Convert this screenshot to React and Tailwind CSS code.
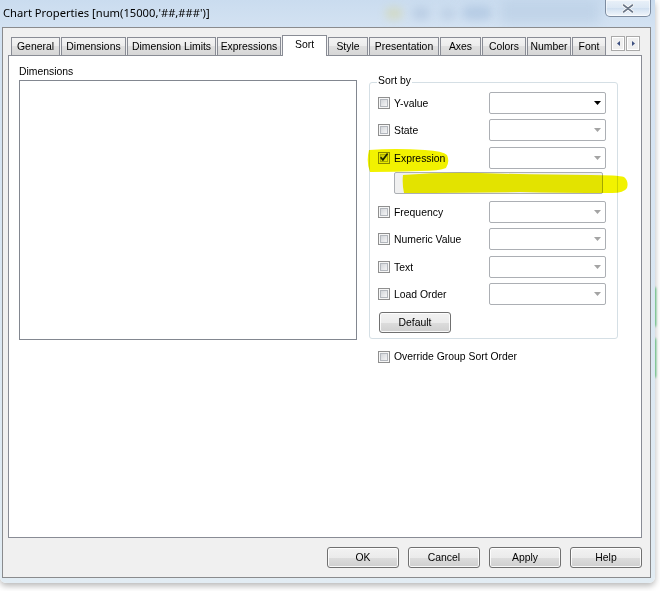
import React from "react";

function Checkbox({ checked }) {
  return (
    <div className="w-[12px] h-[12px] shrink-0 border border-[#8f8f8f] bg-[#f6f6f6] p-[1px]">
      <div className="relative w-full h-full border border-[#b3b7bd] bg-[linear-gradient(135deg,#d3d6da,#f5f5f6)]">
        {checked && (
          <svg className="absolute left-[-2px] top-[-3px]" width="10" height="10" viewBox="0 0 10 10">
            <path d="M1.6 5.2 L3.9 7.8 L8.6 1.6" fill="none" stroke="#1c2636" strokeWidth="1.7" />
          </svg>
        )}
      </div>
    </div>
  );
}

function Combo({ enabled }) {
  return (
    <div className="w-[117px] h-[22px] rounded-[2px] border border-[#acafb4] bg-white flex items-center justify-end pr-[4px]">
      <svg width="7" height="4" viewBox="0 0 7 4">
        <path d="M0 0H7L3.5 4Z" fill={enabled ? "#000000" : "#a4a4a4"} />
      </svg>
    </div>
  );
}

function Row({ label, checked, enabled, className }) {
  return (
    <div className={"flex items-center h-[22px] pl-[8px] pr-[11px] " + className}>
      <Checkbox checked={checked} />
      <span className="ml-[4px] leading-[14px] pt-px whitespace-nowrap">{label}</span>
      <div className="ml-auto">
        <Combo enabled={enabled} />
      </div>
    </div>
  );
}

function Btn({ children, className }) {
  return (
    <div
      className={
        "w-[72px] h-[21px] shrink-0 rounded-[3px] border border-[#707070] shadow-[inset_0_0_0_1px_rgba(255,255,255,0.85)] bg-[linear-gradient(to_bottom,#f2f2f2_0%,#ebebeb_50%,#dddddd_50%,#cfcfcf_100%)] flex items-center justify-center leading-[14px] " +
        (className || "")
      }
    >
      {children}
    </div>
  );
}

const tabs = [
  { t: "General", w: "w-[49px]" },
  { t: "Dimensions", w: "w-[65px]" },
  { t: "Dimension Limits", w: "w-[89px]" },
  { t: "Expressions", w: "w-[64px]" },
  { t: "Sort", w: "w-[45px]", sel: true },
  { t: "Style", w: "w-[40px]" },
  { t: "Presentation", w: "w-[70px]" },
  { t: "Axes", w: "w-[41px]" },
  { t: "Colors", w: "w-[44px]" },
  { t: "Number", w: "w-[44px]" },
  { t: "Font", w: "w-[34px]" },
];

export default function App() {
  return (
    <div className="relative w-[660px] h-[591px] overflow-hidden bg-white font-['Liberation_Sans',Arial,sans-serif] text-[10.4px] text-black">
      {/* green glows of background app at right */}
      <div className="absolute left-[652px] top-[287px] w-[4px] h-[40px] rounded-full bg-[#62d283] blur-[1px]" />
      <div className="absolute left-[652px] top-[338px] w-[4px] h-[40px] rounded-full bg-[#62d283] blur-[1px]" />

      {/* window */}
      <div className="relative w-[655px] h-[583px] rounded-b-[6px] bg-[linear-gradient(to_bottom,#cadcef_0px,#d3e2f2_27px,#e2ecf3_100%)] shadow-[0_3px_6px_rgba(0,0,0,0.28)] flex flex-col pl-[2px] pr-[4px]">
        {/* blurred desktop behind glass */}
        <div className="absolute left-[385px] top-[7px] w-[18px] h-[13px] rounded-full bg-[#d7d38c] blur-[4px] opacity-40" />
        <div className="absolute left-[412px] top-[7px] w-[18px] h-[13px] rounded-full bg-[#9fb6d4] blur-[4px] opacity-40" />
        <div className="absolute left-[440px] top-[8px] w-[16px] h-[12px] rounded-full bg-[#a8bdd8] blur-[4px] opacity-40" />
        <div className="absolute left-[462px] top-[6px] w-[30px] h-[14px] rounded-full bg-[#93b0d3] blur-[4px] opacity-40" />
        <div className="absolute left-[500px] top-[0px] w-[100px] h-[24px] bg-[#b8cde4] blur-[6px] opacity-60" />

        {/* title bar */}
        <div className="relative h-[27px] shrink-0 flex items-start">
          <div className="pt-[5px] pl-[1px] leading-[15px] text-[11.2px] font-['Noto_Sans',sans-serif] whitespace-nowrap">
            Chart Properties [num(15000,'##,###')]
          </div>
          <div className="ml-auto w-[46px] h-[17px] rounded-b-[5px] border border-t-0 border-[#7d8ca0] shadow-[inset_0_0_0_1px_rgba(255,255,255,0.55)] bg-[linear-gradient(to_bottom,rgba(255,255,255,0.6),rgba(255,255,255,0.3)_50%,rgba(210,224,240,0.5)_50%,rgba(255,255,255,0.7))] flex items-center justify-center">
            <svg width="12" height="9" viewBox="0 0 12 9">
              <path d="M1.5 1 L10.5 8 M10.5 1 L1.5 8" stroke="#ffffff" strokeWidth="3.4" strokeLinecap="round" />
              <path d="M1.5 1 L10.5 8 M10.5 1 L1.5 8" stroke="#6c7889" strokeWidth="1.6" strokeLinecap="round" />
            </svg>
          </div>
        </div>

        {/* client area */}
        <div className="relative w-[649px] h-[551px] shrink-0 border border-[#8a8b8d] bg-[#f0f0f0] flex flex-col">
          {/* tab strip */}
          <div className="relative z-10 mt-[7px] ml-[8px] h-[21px] flex">
            <div className="w-[600px] h-[21px] overflow-hidden flex gap-px">
              {tabs.map((tb) =>
                tb.sel ? (
                  <div
                    key={tb.t}
                    className={"shrink-0 h-[21px] border border-b-0 border-[#898c95] bg-white flex items-start justify-center pt-[2px] leading-[14px] " + tb.w}
                  >
                    {tb.t}
                  </div>
                ) : (
                  <div
                    key={tb.t}
                    className={"shrink-0 mt-[2px] h-[18px] border border-b-0 border-[#898c95] bg-[linear-gradient(to_bottom,#f3f3f3,#ececec_50%,#dfdfdf_50%,#d6d6d6)] flex items-center justify-center leading-[14px] whitespace-nowrap " + tb.w}
                  >
                    {tb.t}
                  </div>
                )
              )}
            </div>
            <div className="flex gap-px mt-[1px]">
              <div className="w-[14px] h-[15px] border border-[#a9a9a9] bg-[#efefef] shadow-[inset_0_0_0_1px_#ffffff] flex items-center justify-center">
                <svg width="3" height="5" viewBox="0 0 3 5">
                  <path d="M3 0V5L0 2.5Z" fill="#3d5080" />
                </svg>
              </div>
              <div className="w-[14px] h-[15px] border border-[#a9a9a9] bg-[#efefef] shadow-[inset_0_0_0_1px_#ffffff] flex items-center justify-center">
                <svg width="3" height="5" viewBox="0 0 3 5">
                  <path d="M0 0V5L3 2.5Z" fill="#3d5080" />
                </svg>
              </div>
            </div>
          </div>

          {/* tab panel */}
          <div className="relative -mt-px ml-[5px] w-[634px] h-[483px] shrink-0 border border-[#898c95] bg-white flex pl-[10px] pt-[9px]">
            {/* left column */}
            <div className="w-[338px] flex flex-col">
              <div className="h-[14px] leading-[14px]">Dimensions</div>
              <div className="mt-px h-[260px] border border-[#828790] bg-white" />
            </div>

            {/* right column */}
            <div className="ml-[12px] w-[249px] flex flex-col">
              <div className="relative mt-[17px] h-[257px] rounded-[3px] border border-[#d5dfe5] pt-[9px] flex flex-col">
                <div className="absolute left-[7px] top-[-9px] px-[1px] bg-white leading-[14px]">Sort by</div>
                <Row label="Y-value" enabled className="" />
                <Row label="State" className="mt-[5px]" />
                <Row label="Expression" checked className="mt-[6px]" />
                <div className="mt-[3px] ml-[24px] w-[209px] h-[22px] rounded-[2px] border border-[#acafb4] bg-[#f0f0f0]" />
                <Row label="Frequency" className="mt-[7px]" />
                <Row label="Numeric Value" className="mt-[5px]" />
                <Row label="Text" className="mt-[6px]" />
                <Row label="Load Order" className="mt-[5px]" />
                <Btn className="mt-[7px] ml-[9px]">Default</Btn>
              </div>
              <div className="mt-[12px] pl-[9px] h-[12px] flex items-center">
                <Checkbox />
                <span className="ml-[4px] leading-[14px] whitespace-nowrap">Override Group Sort Order</span>
              </div>
            </div>
          </div>

          {/* buttons */}
          <div className="mt-[9px] pr-[8px] flex justify-end gap-[9px]">
            <Btn>OK</Btn>
            <Btn>Cancel</Btn>
            <Btn>Apply</Btn>
            <Btn>Help</Btn>
          </div>
        </div>
      </div>

      {/* yellow highlighter marks */}
      <svg
        className="absolute left-0 top-0 pointer-events-none mix-blend-multiply"
        width="660"
        height="591"
        viewBox="0 0 660 591"
      >
        <path
          d="M369 150 Q395 148 425 150 Q443 151 447 155 Q450 162 446 168 Q440 171 420 171 Q395 172 370 172 Q366 162 369 150 Z"
          fill="#f2f200"
        />
        <path
          d="M403 175 Q440 172 480 173 Q540 175 590 175 Q618 175 624 177 Q629 181 627 188 Q624 193 612 193 Q560 193 520 192 Q470 193 404 193 Q402 184 403 175 Z"
          fill="#f2f200"
        />
      </svg>
    </div>
  );
}
